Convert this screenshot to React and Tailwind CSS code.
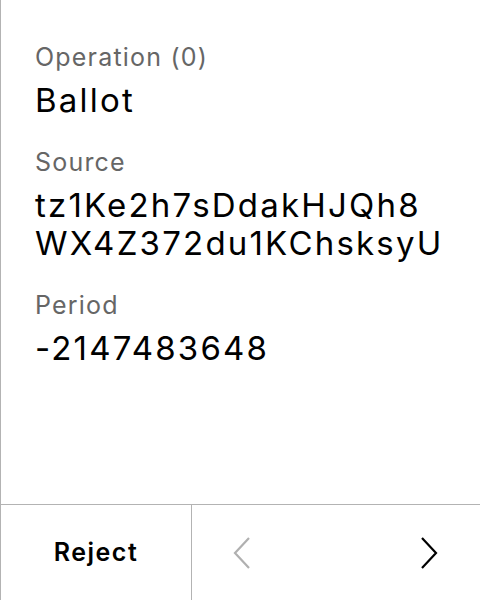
import React from 'react'

const fields = [
  { label: 'Operation (0)', value: 'Ballot' },
  { label: 'Source', value: 'tz1Ke2h7sDdakHJQh8 WX4Z372du1KChsksyU' },
  { label: 'Period', value: '-2147483648' }
]

const Chevron = ({ dir, className }) => (
  <svg width="18" height="34" viewBox="0 0 18 34" fill="none" className={className}>
    <path
      d={dir === 'left' ? 'M16 2 L2 17 L16 32' : 'M2 2 L16 17 L2 32'}
      stroke="currentColor"
      strokeWidth="2.2"
    />
  </svg>
)

const App = () => {
  return (
    <div
      className="flex h-[600px] w-[480px] flex-col border-l border-[#b3b3b3] bg-white"
      style={{ fontFamily: 'Inter, "Noto Sans", sans-serif' }}
    >
      <main className="flex-1 pl-[34px] pr-4 pt-[42px]">
        {fields.map((field) => (
          <div key={field.label} className="mb-[28px]">
            <p className="text-[25px] leading-[30px] tracking-[1.2px] text-[#666666]">
              {field.label}
            </p>
            <p className="mt-[9px] w-[430px] text-[33px] leading-[38px] tracking-[2.2px] text-black">
              {field.value}
            </p>
          </div>
        ))}
      </main>
      <footer className="flex h-[96px] border-t border-[#b3b3b3]">
        <button className="flex w-[191px] items-center justify-center border-r border-[#b3b3b3] text-[25px] font-semibold tracking-[1.5px] text-black">
          Reject
        </button>
        <div className="flex flex-1 items-center justify-between pl-[41px] pr-[42px]">
          <Chevron dir="left" className="text-[#b0b0b0]" />
          <Chevron dir="right" className="text-black" />
        </div>
      </footer>
    </div>
  )
}

export default App
